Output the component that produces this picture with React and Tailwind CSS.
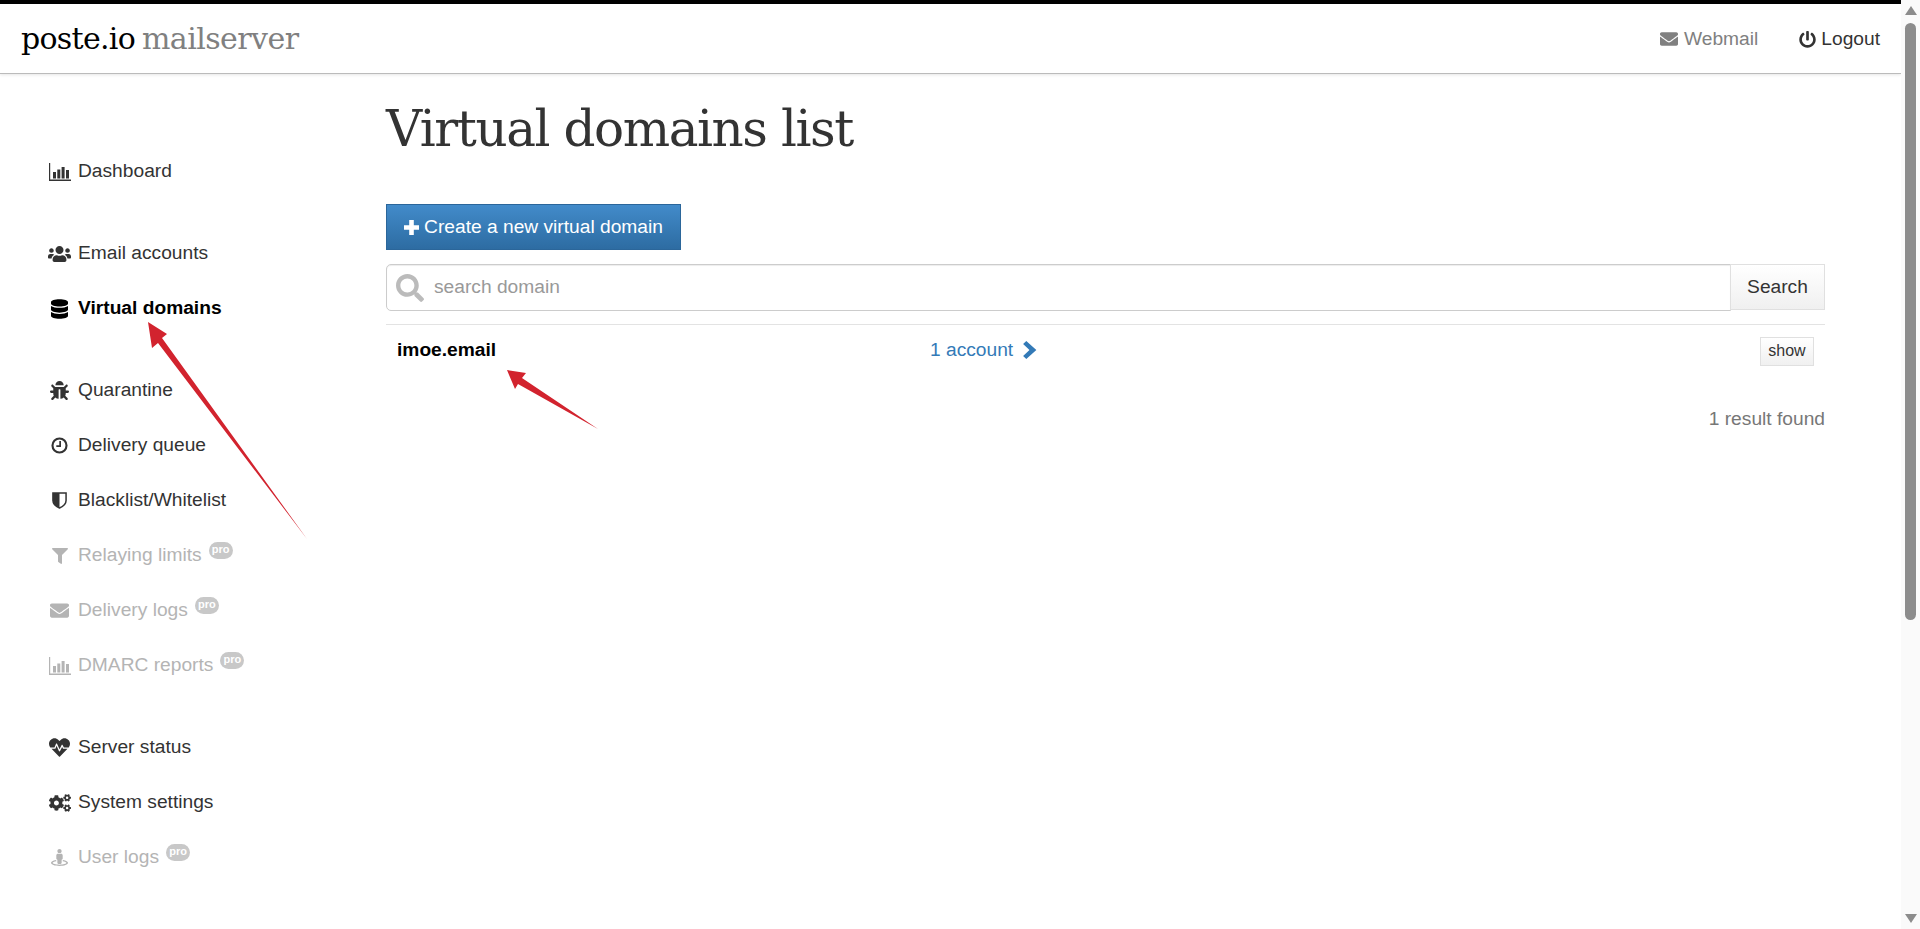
import {
  FaUsers,
  FaDatabase,
  FaBug,
  FaFilter,
  FaEnvelope,
  FaHeartbeat,
  FaCogs,
  FaStreetView,
  FaPowerOff,
  FaSearch,
} from 'react-icons/fa';

const SANS = 'font-["Liberation_Sans",Arial,sans-serif]';
const SLAB = 'font-["DejaVu_Serif",serif]';

function BarChartIcon({ className }) {
  return (
    <svg viewBox="0 0 22 18" className={className} fill="currentColor">
      <path d="M0 0h1.2v16.6H22V18H0z" />
      <path d="M4 9h3v6.500H4zM8.300 6.500h3v9h-3zM12.600 4h3v11.500h-3zM17 7h3v8.500h-3z" />
    </svg>
  );
}

function ClockIcon({ className }) {
  return (
    <svg viewBox="0 0 16 16" className={className} fill="none" stroke="currentColor">
      <circle cx="8" cy="8" r="6.6" strokeWidth="2" />
      <path d="M8.6 3.8v4.8H5" strokeWidth="1.6" />
    </svg>
  );
}

function ShieldIcon({ className }) {
  return (
    <svg viewBox="0 0 16 18" className={className} fill="currentColor">
      <path d="M1 1h14v8c0 4-3.500 6.500-7 8-3.500-1.500-7-4-7-8z" fill="none" stroke="currentColor" strokeWidth="1.600" />
      <path d="M1 1h7v16c-3.500-1.500-7-4-7-8z" />
    </svg>
  );
}

function PlusIcon({ className }) {
  return (
    <svg viewBox="0 0 15 15" className={className} fill="currentColor">
      <path d="M5.200 0h4.600v5.200H15v4.600H9.800V15H5.200V9.800H0V5.200h5.200z" />
    </svg>
  );
}

function ChevronIcon({ className }) {
  return (
    <svg viewBox="0 0 14 17" className={className} fill="currentColor">
      <path d="M3.500 0L13 8.500 3.500 17 0.500 14.200 6.500 8.500 0.500 2.800z" />
    </svg>
  );
}

function NavItem({ icon: Icon, label, active, disabled, iconClass = 'w-[19px] h-[19px]' }) {
  const color = disabled ? 'text-[#b4b4b4]' : active ? 'text-black font-bold' : 'text-[#333]';
  return (
    <a className={`flex items-center h-[55px] text-[19.2px] ${color}`}>
      <span className="w-[30px] shrink-0 flex items-center pr-[7px] justify-center">
        <Icon className={iconClass} />
      </span>
      <span>{label}</span>
      {disabled && (
        <span className="ml-[7px] mb-[10px] w-[24px] h-[17px] rounded-full bg-[#c8c8c8] text-white text-[11px] font-bold leading-[15px] text-center">
          pro
        </span>
      )}
    </a>
  );
}

function Sidebar() {
  return (
    <aside className="w-[386px] shrink-0 pt-[70px] pl-[48px]">
      <NavItem icon={BarChartIcon} label="Dashboard" iconClass="w-[22px] h-[18px]" />
      <div className="mt-[27px]">
        <NavItem icon={FaUsers} label="Email accounts" iconClass="w-[24px] h-[24px]" />
        <NavItem icon={FaDatabase} label="Virtual domains" active iconClass="w-[17px] h-[20px]" />
      </div>
      <div className="mt-[27px]">
        <NavItem icon={FaBug} label="Quarantine" />
        <NavItem icon={ClockIcon} label="Delivery queue" iconClass="w-[17px] h-[17px]" />
        <NavItem icon={ShieldIcon} label="Blacklist/Whitelist" iconClass="w-[15px] h-[17px]" />
        <NavItem icon={FaFilter} label="Relaying limits" disabled iconClass="w-[16px] h-[16px]" />
        <NavItem icon={FaEnvelope} label="Delivery logs" disabled iconClass="w-[21px] h-[19px]" />
        <NavItem icon={BarChartIcon} label="DMARC reports" disabled iconClass="w-[22px] h-[18px]" />
      </div>
      <div className="mt-[27px]">
        <NavItem icon={FaHeartbeat} label="Server status" iconClass="w-[21px] h-[21px]" />
        <NavItem icon={FaCogs} label="System settings" iconClass="w-[22px] h-[20px]" />
        <NavItem icon={FaStreetView} label="User logs" disabled iconClass="w-[17px] h-[21px]" />
      </div>
    </aside>
  );
}

function Scrollbar() {
  return (
    <div className="w-[19px] h-full shrink-0 bg-[#fafafa] flex flex-col items-center">
      <div className="mt-[6px] w-0 h-0 border-x-[6px] border-x-transparent border-b-[9px] border-b-[#8c8c8c]" />
      <div className="mt-[8px] w-[11px] h-[597px] rounded-full bg-[#8c8c8c]" />
      <div className="mt-auto mb-[6px] w-0 h-0 border-x-[6px] border-x-transparent border-t-[9px] border-t-[#8c8c8c]" />
    </div>
  );
}

export default function App() {
  return (
    <div className={`relative flex h-screen overflow-hidden bg-white ${SANS}`}>
      <div className="flex-1 min-w-0 flex flex-col">
        <div className="h-1 bg-black" />
        <header className="h-[70px] shrink-0 flex items-center justify-between pl-[21px] pr-[21px] border-b border-[#bbb] shadow-[0_1px_3px_rgba(0,0,0,0.1)]">
          <div className={`${SLAB} text-[30px] tracking-[-0.7px] [word-spacing:-2px] text-black`}>
            poste.io <span className="text-[#808080] tracking-[-0.55px]">mailserver</span>
          </div>
          <nav className="flex items-center text-[19.2px] gap-[41px] pt-[2px]">
            <a className="flex items-center gap-[5px] text-[#808080]">
              <FaEnvelope className="w-[20px] h-[18px]" />
              Webmail
            </a>
            <a className="flex items-center gap-[5px] text-[#333]">
              <FaPowerOff className="w-[17px] h-[17px]" />
              Logout
            </a>
          </nav>
        </header>

        <div className="flex flex-1 min-h-0">
          <Sidebar />
          <main className="flex-1 min-w-0 pr-[76px] pt-[25px]">
            <h1 className={`${SLAB} text-[50px] leading-[60px] tracking-[-1.45px] font-normal text-[#333]`}>
              Virtual domains list
            </h1>

            <button className="mt-[45px] w-[295px] h-[46px] flex items-center justify-center gap-[5px] border border-[#2b669a] bg-gradient-to-b from-[#428bca] to-[#2d6ca2] text-white text-[19.2px]">
              <PlusIcon className="w-[15px] h-[15px]" />
              Create a new virtual domain
            </button>

            <div className="mt-[14px] flex">
              <div className="flex-1 h-[47px] flex items-center pl-[9px] border border-[#ccc] rounded-l-[5px] shadow-[inset_0_1px_1px_rgba(0,0,0,0.075)]">
                <FaSearch className="w-[28px] h-[28px] text-[#bbb] shrink-0" />
                <input
                  placeholder="search domain"
                  className="ml-[10px] flex-1 outline-none text-[19.2px] placeholder:text-[#999]"
                />
              </div>
              <button className="-ml-px w-[95px] h-[46px] border border-[#e0e0e0] bg-gradient-to-b from-white to-[#f0f0f0] text-[#333] text-[19.2px]">
                Search
              </button>
            </div>

            <div className="mt-[13px] border-t border-[#e3e3e3] h-[46px] flex items-center px-[11px] pt-[6px]">
              <a className="w-[533px] text-[19.2px] font-bold text-black">imoe.email</a>
              <a className="flex items-center gap-[9px] text-[19.2px] text-[#337ab7]">
                1 account
                <ChevronIcon className="w-[16px] h-[18px]" />
              </a>
              <button className="ml-auto w-[54px] h-[29px] mt-[1px] border border-[#e0e0e0] bg-gradient-to-b from-white to-[#f0f0f0] text-[#333] text-[16px]">
                show
              </button>
            </div>

            <p className="mt-[35px] text-right text-[19.2px] text-[#777]">1 result found</p>
          </main>
        </div>
      </div>
      <Scrollbar />

      {/* annotation arrows drawn on top of the screenshot */}
      <svg className="absolute inset-0 w-full h-full pointer-events-none" viewBox="0 0 1920 929">
        <path d="M148 322 L167 334 L162 338 L307 539 L158 343 L152 348 Z" fill="#d2232e" />
        <path d="M507 370 L526 373 L522 378 L598 429 L518 384 L515 389 Z" fill="#d2232e" />
      </svg>
    </div>
  );
}
